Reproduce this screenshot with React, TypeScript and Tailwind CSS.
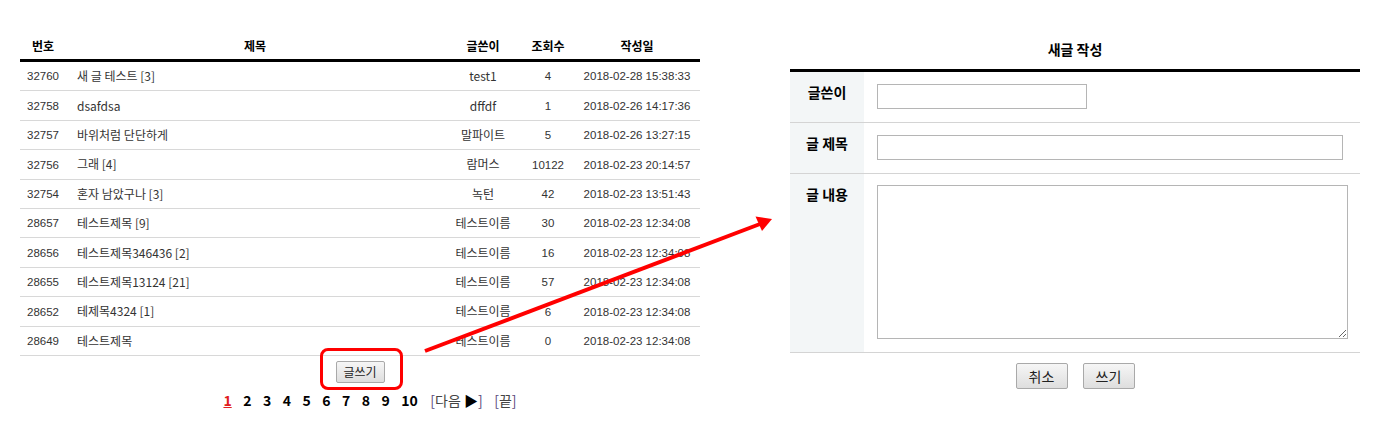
import React from "react";

const rows = [
  ["32760", "새 글 테스트 [3]", "test1", "4", "2018-02-28 15:38:33"],
  ["32758", "dsafdsa", "dffdf", "1", "2018-02-26 14:17:36"],
  ["32757", "바위처럼 단단하게", "말파이트", "5", "2018-02-26 13:27:15"],
  ["32756", "그래 [4]", "람머스", "10122", "2018-02-23 20:14:57"],
  ["32754", "혼자 남았구나 [3]", "녹턴", "42", "2018-02-23 13:51:43"],
  ["28657", "테스트제목 [9]", "테스트이름", "30", "2018-02-23 12:34:08"],
  ["28656", "테스트제목346436 [2]", "테스트이름", "16", "2018-02-23 12:34:08"],
  ["28655", "테스트제목13124 [21]", "테스트이름", "57", "2018-02-23 12:34:08"],
  ["28652", "테제목4324 [1]", "테스트이름", "6", "2018-02-23 12:34:08"],
  ["28649", "테스트제목", "테스트이름", "0", "2018-02-23 12:34:08"],
];

const font = { fontFamily: '"Noto Sans CJK KR", "Noto Sans", sans-serif' };
const numFont = { fontFamily: '"Liberation Sans", "Noto Sans CJK KR", sans-serif' };

export default function App() {
  return (
    <div className="relative w-[1387px] h-[442px] bg-white overflow-hidden text-[#333]" style={font}>
      <div className="flex">
        {/* Left list */}
        <div className="ml-[20px] w-[680px] mt-[31px] flex flex-col">
          <div className="flex h-[31px] items-center pt-[1px] border-b-[3px] border-black text-[12px] font-bold text-black leading-none">
            <div className="w-[46px] text-center">번호</div>
            <div className="w-[378px] text-center">제목</div>
            <div className="w-[78px] text-center">글쓴이</div>
            <div className="w-[52px] text-center">조회수</div>
            <div className="w-[126px] text-center">작성일</div>
          </div>
          {rows.map((r) => (
            <div key={r[0]} className="flex h-[29.4px] items-center border-b border-[#d8d8d8] text-[12px] leading-none">
              <div className="w-[46px] text-center text-[11.5px] pt-[2px]" style={numFont}>{r[0]}</div>
              <div className="w-[378px] pl-[11px]">{r[1]}</div>
              <div className="w-[78px] text-center">{r[2]}</div>
              <div className="w-[52px] text-center text-[11.5px] pt-[2px]" style={numFont}>{r[3]}</div>
              <div className="w-[126px] text-center text-[11.5px] pt-[2px]" style={numFont}>{r[4]}</div>
            </div>
          ))}
          <div className="flex justify-center mt-[2px]">
            <div className="relative">
              <button className="w-[49px] h-[22px] border border-[#a9a9a9] rounded-[2px] bg-gradient-to-b from-[#f6f6f6] to-[#dedede] text-[12px] leading-none text-[#222]">
                글쓰기
              </button>
              <div className="absolute left-[-16px] top-[-10px] w-[83px] h-[42px] border-[3px] border-[#ff0000] rounded-[8px]" />
            </div>
          </div>
          <div className="flex justify-center items-center mt-[10px] pl-[20px] text-[14px] leading-none gap-[11.5px]">
            <span className="text-[#e02020] underline font-bold">1</span>
            {["2", "3", "4", "5", "6", "7", "8", "9", "10"].map((n) => (
              <span key={n} className="font-bold text-black">{n}</span>
            ))}
            <span className="text-[#444] ml-[1px]">
              <span className="text-[#5a4a7a]">[</span>다음 <span className="text-black">▶</span><span className="text-[#5a4a7a]">]</span>
            </span>
            <span className="text-[#444]">
              <span className="text-[#5a4a7a]">[</span>끝<span className="text-[#5a4a7a]">]</span>
            </span>
          </div>
        </div>

        {/* Right form */}
        <div className="ml-[90px] w-[570px] mt-[40px] flex flex-col">
          <div className="h-[18px] flex items-center justify-center text-[14px] font-bold text-black leading-none">새글 작성</div>
          <div className="mt-[11px] border-t-[3px] border-black">
            <div className="flex h-[51px] border-b border-[#d4d4d4]">
              <div className="w-[74px] bg-[#f3f6f7] flex justify-center pt-[13px] text-[14px] font-bold text-black leading-none">글쓴이</div>
              <div className="pl-[13px] pt-[12px]">
                <input className="w-[210px] h-[25px] border border-[#b5b5b5] bg-white outline-none" />
              </div>
            </div>
            <div className="flex h-[51px] border-b border-[#d4d4d4]">
              <div className="w-[74px] bg-[#f3f6f7] flex justify-center pt-[13px] text-[14px] font-bold text-black leading-none">글 제목</div>
              <div className="pl-[13px] pt-[12px]">
                <input className="w-[466px] h-[25px] border border-[#b5b5b5] bg-white outline-none" />
              </div>
            </div>
            <div className="flex h-[179px] border-b border-[#d4d4d4]">
              <div className="w-[74px] bg-[#f3f6f7] flex justify-center pt-[13px] text-[14px] font-bold text-black leading-none">글 내용</div>
              <div className="pl-[13px] pt-[11px]">
                <textarea className="block w-[471px] h-[154px] border border-[#b5b5b5] bg-white outline-none" />
              </div>
            </div>
          </div>
          <div className="flex justify-center gap-[15px] mt-[10px]">
            <button className="w-[52px] h-[26px] border border-[#a9a9a9] rounded-[2px] bg-gradient-to-b from-[#f6f6f6] to-[#dedede] text-[14px] leading-none text-[#222]">
              취소
            </button>
            <button className="w-[52px] h-[26px] border border-[#a9a9a9] rounded-[2px] bg-gradient-to-b from-[#f6f6f6] to-[#dedede] text-[14px] leading-none text-[#222]">
              쓰기
            </button>
          </div>
        </div>
      </div>

      <svg className="absolute left-0 top-0 pointer-events-none" width="1387" height="442">
        <line x1="425" y1="351" x2="760" y2="224" stroke="#ff0000" strokeWidth="4" />
        <polygon points="772,219 762,231 755.5,216.5" fill="#ff0000" />
      </svg>
    </div>
  );
}
